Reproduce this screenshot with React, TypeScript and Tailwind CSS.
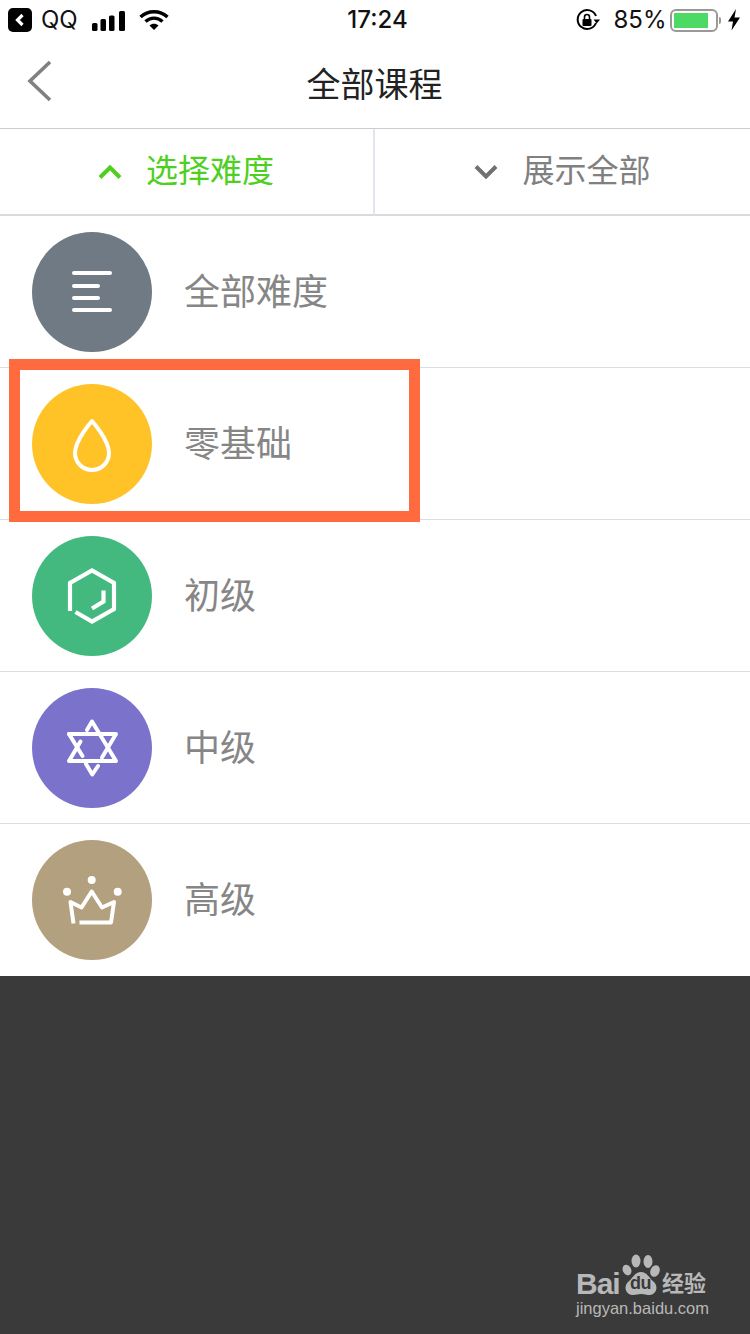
import type { ReactNode } from "react";

const cjk = "font-['Noto_Sans_CJK_SC','Noto_Sans',sans-serif]";

const levels: { name: string; bg: string; icon: ReactNode }[] = [
  {
    name: "全部难度",
    bg: "bg-[#6f7a84]",
    icon: (
      <g stroke="#fff" strokeWidth="4" strokeLinecap="round" fill="none">
        <path d="M42 41H78" />
        <path d="M42 54H66" />
        <path d="M42 66H66" />
        <path d="M42 78H78" />
      </g>
    ),
  },
  {
    name: "零基础",
    bg: "bg-[#ffc328]",
    icon: (
      <path
        d="M60 37C60 37 43 56 43 69A17 17 0 0 0 77 69C77 56 60 37 60 37Z"
        stroke="#fff"
        strokeWidth="4"
        strokeLinejoin="round"
        fill="none"
      />
    ),
  },
  {
    name: "初级",
    bg: "bg-[#43b97f]",
    icon: (
      <g stroke="#fff" strokeWidth="4.2" fill="none">
        <path d="M38 75V47L60 34.5L82 47V73L60 85.5L43.5 76" />
        <path d="M71.5 54.5V65.5L60 72.5" />
      </g>
    ),
  },
  {
    name: "中级",
    bg: "bg-[#7b72cb]",
    icon: (
      <g stroke="#fff" strokeWidth="4" strokeLinejoin="round" strokeLinecap="round" fill="none">
        <path d="M55 42L60 33.5L84 73H37L48.5 53.5" />
        <path d="M37 46H84L70 69.5" />
        <path d="M37 46L50.5 68" />
        <path d="M54 76L60.3 86.5L66 78" />
      </g>
    ),
  },
  {
    name: "高级",
    bg: "bg-[#b3a07f]",
    icon: (
      <g fill="#fff">
        <circle cx="59.7" cy="40" r="4" />
        <circle cx="35" cy="51.7" r="4" />
        <circle cx="85.7" cy="51.7" r="4" />
        <path
          d="M41.5 83.5L38.5 62L49.5 67.5L59.7 51.5L70 67.5L82 62L79 82.5H47.5"
          stroke="#fff"
          strokeWidth="4"
          strokeLinejoin="round"
          fill="none"
        />
      </g>
    ),
  },
];

function StatusBar() {
  return (
    <div className="flex h-10 items-center font-['Inter',sans-serif] text-[24px] text-[#111]">
      <div className="ml-2 flex h-6 w-6 items-center justify-center rounded-[5px] bg-black">
        <svg width="24" height="24" viewBox="0 0 24 24">
          <path d="M14.5 7L9.5 12L14.5 17" stroke="#fff" strokeWidth="3.2" fill="none" />
        </svg>
      </div>
      <span className="ml-[9px] w-[51px] leading-none">QQ</span>
      <svg width="34" height="20" viewBox="0 0 34 20" className="mt-[1px]">
        <rect x="0" y="12" width="5.5" height="8" rx="1.5" fill="#000" />
        <rect x="8.5" y="8" width="5.5" height="12" rx="1.5" fill="#000" />
        <rect x="17" y="4.5" width="5.5" height="15.5" rx="1.5" fill="#000" />
        <rect x="27" y="0" width="6" height="20" rx="1.5" fill="#000" />
      </svg>
      <svg width="30" height="22" viewBox="0 0 30 22" className="ml-[13px]">
        <g stroke="#000" strokeWidth="3.4" fill="none">
          <path d="M1.5 8C9 1 21 1 28.5 8" />
          <path d="M6.5 12.5C11.5 8 18.5 8 23.5 12.5" />
        </g>
        <path d="M10.5 16.5C13 14.2 17 14.2 19.5 16.5L15 21Z" fill="#000" />
      </svg>
      <span className="ml-[177px] w-[63px] text-center font-medium leading-none">17:24</span>
      <svg width="26" height="24" viewBox="0 0 26 24" className="ml-[166px]">
        <path d="M21 8A9.5 9.5 0 1 0 21 15" stroke="#000" strokeWidth="2" fill="none" />
        <path d="M18.5 11.5H25L21.8 15.5Z" fill="#000" />
        <rect x="7.5" y="11" width="9" height="7" rx="1" fill="#000" />
        <path d="M9.5 11V9A2.5 2.5 0 0 1 14.5 9V11" stroke="#000" strokeWidth="1.6" fill="none" />
      </svg>
      <span className="ml-[12px] w-[54px] text-center leading-none">85%</span>
      <div className="ml-[3px] flex items-center">
        <div className="h-[23px] w-[48px] rounded-[6px] border-2 border-[#999] p-[2px] pr-[8px]">
          <div className="h-full w-full bg-[#4cd964]" />
        </div>
        <div className="ml-[1px] h-[7px] w-[2px] rounded-r-[2px] bg-[#999]" />
      </div>
      <svg width="14" height="22" viewBox="0 0 14 22" className="ml-[6px]">
        <path d="M9 0L1 12.5H6L4.5 21.5L13 8.5H7.5Z" fill="#000" />
      </svg>
    </div>
  );
}

function Watermark() {
  return (
    <div className="absolute bottom-[16px] right-[40px] w-[134px] font-['Liberation_Sans',sans-serif] text-[#b8b8b8]">
      <div className="flex h-[42px] items-end">
        <span className="-mb-[3px] w-[46px] shrink-0 text-[30px] font-bold leading-[30px] tracking-[-1px]">Bai</span>
        <div className="relative h-[42px] w-[40px] shrink-0">
          <svg width="40" height="42" viewBox="0 0 40 42" className="absolute left-0 top-0">
            <g fill="#b8b8b8">
              <ellipse cx="14" cy="7" rx="4.5" ry="6.5" />
              <ellipse cx="26" cy="7.5" rx="4.5" ry="6.5" />
              <ellipse cx="5" cy="16" rx="4.2" ry="5.5" transform="rotate(-25 5 16)" />
              <ellipse cx="33" cy="17" rx="4.5" ry="6" transform="rotate(25 33 17)" />
              <path d="M19 18C25 18 27 24 32 28C37 33 34 41 27 41C23 41 22 40 19 40C16 40 14 41 11 41C4 41 1 33 6 28C11 24 13 18 19 18Z" />
            </g>
          </svg>
          <span className="absolute bottom-[4px] left-[8px] text-[18px] font-bold leading-none tracking-[-0.5px] text-[#3a3a3a]">
            du
          </span>
        </div>
        <span className={`${cjk} shrink-0 whitespace-nowrap text-[22px] font-bold leading-[29px]`}>经验</span>
      </div>
      <div className="mt-[2px] whitespace-nowrap text-[16.5px] leading-[20px]">jingyan.baidu.com</div>
    </div>
  );
}

export default function App() {
  return (
    <div className={`${cjk} relative flex h-[1334px] w-[750px] flex-col overflow-hidden bg-white`}>
      <StatusBar />

      <div className="relative flex h-[88px] items-center justify-center">
        <svg width="26" height="42" viewBox="0 0 26 42" className="absolute left-[27px] top-[20px]">
          <path d="M23 2L3 21L23 40" stroke="#808080" strokeWidth="3.6" fill="none" />
        </svg>
        <span className="pb-[2px] pr-[1px] text-[34px] leading-none text-[#222]">全部课程</span>
      </div>

      <div className="flex h-[88px] border-t border-[#cccccc]">
        <div className="flex w-[375px] items-center justify-center gap-[24px] border-b-2 border-r-2 border-b-[#d9d9de] border-r-[#e4e4ee] pr-[1px]">
          <svg width="24" height="14" viewBox="0 0 24 14">
            <path d="M2 12.5L12 2.5L22 12.5" stroke="#4fcf1f" strokeWidth="4" fill="none" />
          </svg>
          <span className="pb-[8px] text-[32px] leading-none text-[#4fcf1f]">选择难度</span>
        </div>
        <div className="flex w-[375px] items-center justify-center gap-[24px] border-b-2 border-[#d9d9de]">
          <svg width="24" height="14" viewBox="0 0 24 14">
            <path d="M2 1.5L12 11.5L22 1.5" stroke="#707070" strokeWidth="4" fill="none" />
          </svg>
          <span className="pb-[8px] text-[32px] leading-none text-[#808080]">展示全部</span>
        </div>
      </div>

      <div className="flex flex-col">
        {levels.map((level, i) => (
          <div
            key={level.name}
            className={`flex h-[152px] items-center pl-[32px] ${i < levels.length - 1 ? "border-b border-[#dcdce4]" : ""}`}
          >
            <div className={`h-[120px] w-[120px] rounded-full ${level.bg}`}>
              <svg width="120" height="120" viewBox="0 0 120 120">
                {level.icon}
              </svg>
            </div>
            <span className="ml-[32px] pb-[6px] text-[36px] leading-none text-[#868686]">{level.name}</span>
          </div>
        ))}
      </div>

      <div className="relative flex-1 bg-[#3a3a3a]">
        <Watermark />
      </div>

      <div className="absolute left-[9px] top-[359px] h-[163px] w-[411px] border-[11px] border-[#ff6b3f]" />
    </div>
  );
}
